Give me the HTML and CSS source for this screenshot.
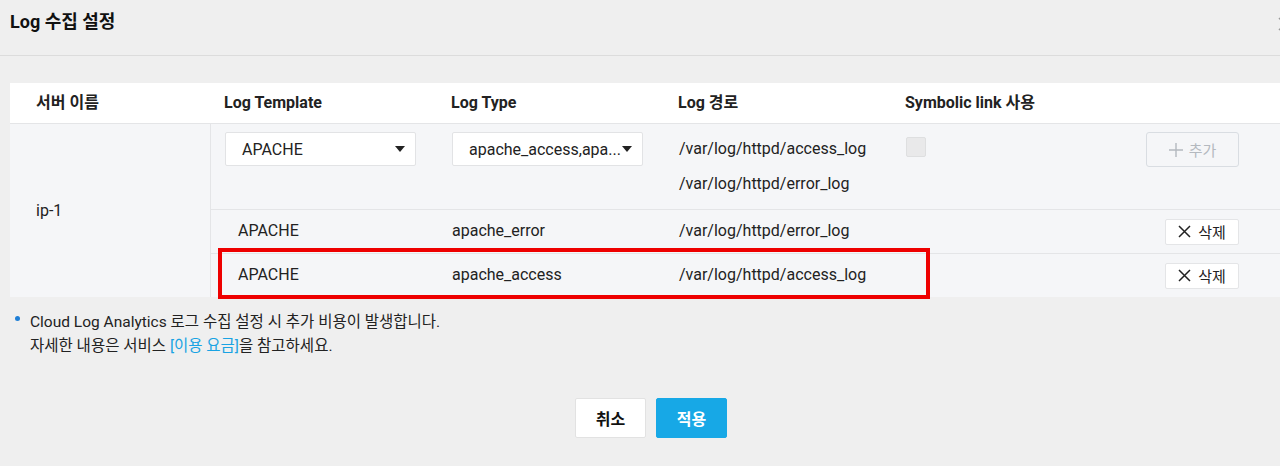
FILE: index.html
```html
<!DOCTYPE html>
<html lang="ko">
<head>
  <meta charset="UTF-8" />
  <meta name="viewport" content="width=device-width, initial-scale=1.0" />
  <title>Log 수집 설정</title>
  <link rel="stylesheet" href="styles.css">
</head>
<body>
  <div class="modal">
    <div class="modal-header">
      <h2>Log 수집 설정</h2>
      <span class="close">
        <svg width="14" height="14" viewBox="0 0 14 14"><path d="M1 1L13 13M13 1L1 13" stroke="#999" stroke-width="1.5"/></svg>
      </span>
    </div>

    <div class="modal-body">
      <div class="log-table">
        <div class="thead">
          <div class="th server">서버 이름</div>
          <div class="th">Log Template</div>
          <div class="th">Log Type</div>
          <div class="th">Log 경로</div>
          <div class="th">Symbolic link 사용</div>
          <div class="th"></div>
        </div>

        <div class="tbody">
          <div class="server-cell">ip-1</div>

          <div class="rows">
            <div class="row row-edit">
              <div class="td">
                <div class="select"><span>APACHE</span><i class="caret"></i></div>
              </div>
              <div class="td">
                <div class="select"><span>apache_access,apa...</span><i class="caret"></i></div>
              </div>
              <div class="td paths">
                <div>/var/log/httpd/access_log</div>
                <div>/var/log/httpd/error_log</div>
              </div>
              <div class="td">
                <span class="checkbox"></span>
              </div>
              <div class="td actions">
                <button class="btn-add" disabled>
                  <svg width="14" height="14" viewBox="0 0 14 14"><path d="M7 0V14M0 7H14" stroke="#b4b9bf" stroke-width="1.4"/></svg>
                  추가
                </button>
              </div>
            </div>

            <div class="row">
              <div class="td tpl">APACHE</div>
              <div class="td">apache_error</div>
              <div class="td">/var/log/httpd/error_log</div>
              <div class="td"></div>
              <div class="td actions">
                <button class="btn-del">
                  <svg width="13" height="13" viewBox="0 0 13 13"><path d="M1 1L12 12M12 1L1 12" stroke="#222" stroke-width="1.5"/></svg>
                  삭제
                </button>
              </div>
            </div>

            <div class="row marked">
              <div class="td tpl">APACHE</div>
              <div class="td">apache_access</div>
              <div class="td">/var/log/httpd/access_log</div>
              <div class="td"></div>
              <div class="td actions">
                <button class="btn-del">
                  <svg width="13" height="13" viewBox="0 0 13 13"><path d="M1 1L12 12M12 1L1 12" stroke="#222" stroke-width="1.5"/></svg>
                  삭제
                </button>
              </div>
              <span class="highlight"></span>
            </div>
          </div>
        </div>
      </div>

      <ul class="notice">
        <li>Cloud Log Analytics 로그 수집 설정 시 추가 비용이 발생합니다.<br>
          자세한 내용은 서비스 <a href="#">[이용 요금]</a>을 참고하세요.</li>
      </ul>

      <div class="footer">
        <button class="btn-cancel">취소</button>
        <button class="btn-apply">적용</button>
      </div>
    </div>
  </div>
</body>
</html>
```

FILE: styles.css
```css
* {
  box-sizing: border-box;
}

body {
  margin: 0;
  background: #efefef;
  font-family: Roboto, 'Noto Sans CJK KR', sans-serif;
  color: #222;
  overflow: hidden;
}

.modal-header {
  height: 56px;
  padding: 10px 0 0 10px;
  border-bottom: 1px solid #dcdcdc;
  display: flex;
  justify-content: space-between;
  align-items: flex-start;
}

.modal-header h2 {
  margin: 0;
  font-size: 18px;
  line-height: 24px;
  font-weight: 700;
  color: #111;
}

.close {
  margin-right: -12px;
  margin-top: 6px;
}

.modal-body {
  padding-top: 27px;
}

/* table */
.log-table {
  margin-left: 10px;
  background: #f5f6f8;
  font-size: 16px;
}

.thead {
  display: grid;
  grid-template-columns: 201px 227px 227px 227px 227px 1fr;
  height: 41px;
  background: #fff;
  border-bottom: 1px solid #e4e5e7;
}

.th {
  padding-left: 13px;
  font-size: 16px;
  font-weight: 700;
  line-height: 40px;
  color: #222;
}

.th.server {
  padding-left: 26px;
}

.tbody {
  display: flex;
}

.server-cell {
  width: 201px;
  flex: none;
  padding-left: 26px;
  display: flex;
  align-items: center;
  border-right: 1px solid #e4e5e7;
}

.rows {
  flex: 1;
}

.row {
  position: relative;
  display: grid;
  grid-template-columns: 227px 227px 227px 227px 1fr;
  height: 44px;
  align-items: center;
  padding-bottom: 3px;
  border-top: 1px solid #e4e5e7;
}

.row:first-child {
  border-top: none;
}

.row-edit {
  height: 85px;
  align-items: start;
  padding: 8px 0 0;
}

.row .actions {
  padding-top: 3px;
}

.row-edit .actions {
  padding-top: 0;
}

.td {
  padding-left: 14px;
}

.td.tpl {
  padding-left: 27px;
}

.paths div {
  line-height: 36px;
  margin-top: -1px;
}

.select {
  width: 191px;
  height: 34px;
  display: flex;
  align-items: center;
  justify-content: space-between;
  padding: 0 10px 0 16px;
  background: #fff;
  border: 1px solid #e2e3e5;
  border-radius: 2px;
  white-space: nowrap;
}

.caret {
  flex: none;
  width: 0;
  height: 0;
  border-left: 5px solid transparent;
  border-right: 5px solid transparent;
  border-top: 6px solid #222;
}

.checkbox {
  display: block;
  width: 20px;
  height: 20px;
  margin-top: 5px;
  background: #e9e9ea;
  border: 1px solid #dedfe0;
  border-radius: 2px;
}

.actions {
  display: flex;
  justify-content: flex-end;
  padding-right: 41px;
}

button {
  font-family: inherit;
  cursor: pointer;
}

.btn-add {
  width: 93px;
  height: 35px;
  display: flex;
  align-items: center;
  justify-content: center;
  gap: 6px;
  background: #f5f6f8;
  border: 1px solid #d9dde2;
  border-radius: 3px;
  color: #b4b9bf;
  font-size: 15px;
}

.btn-del {
  width: 74px;
  height: 26px;
  display: flex;
  align-items: center;
  justify-content: center;
  gap: 7px;
  background: #fff;
  border: 1px solid #e4e5e7;
  border-radius: 2px;
  color: #222;
  font-size: 15px;
  padding: 0;
}

.highlight {
  position: absolute;
  left: 7px;
  top: -6px;
  width: 712px;
  height: 51px;
  border: 4px solid #ee0000;
  pointer-events: none;
}

/* notice */
.notice {
  list-style: none;
  margin: 13px 0 0;
  padding: 0 0 0 30px;
  font-size: 15.5px;
  line-height: 24px;
  color: #222;
}

.notice li {
  position: relative;
}

.notice li::before {
  content: "";
  position: absolute;
  left: -15px;
  top: 6px;
  width: 5px;
  height: 5px;
  border-radius: 50%;
  background: #1f7fd6;
}

.notice a {
  color: #19a3e3;
  text-decoration: none;
}

/* footer */
.footer {
  display: flex;
  justify-content: center;
  gap: 10px;
  margin-top: 40px;
  padding-left: 22px;
}

.footer button {
  width: 71px;
  height: 40px;
  font-size: 16px;
  font-weight: 700;
  border-radius: 2px;
}

.btn-cancel {
  background: #fff;
  border: 1px solid #e2e2e2;
  color: #111;
}

.btn-apply {
  background: #17a8e6;
  border: 1px solid #17a8e6;
  color: #fff;
}
```
